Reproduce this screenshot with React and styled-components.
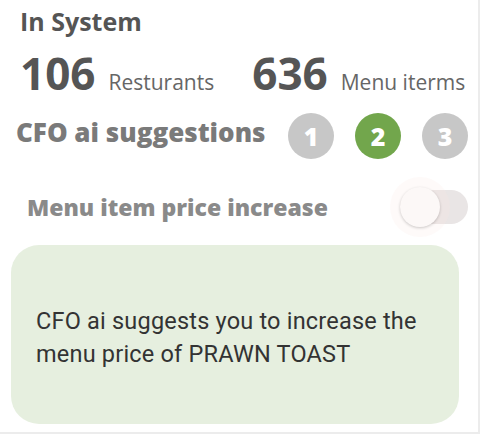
import styled, { createGlobalStyle } from "styled-components";

const GlobalStyle = createGlobalStyle`
  html, body {
    margin: 0;
    padding: 0;
    background: #ffffff;
  }
  * {
    box-sizing: border-box;
  }
`;

const Panel = styled.div`
  width: 480px;
  height: 434px;
  display: flex;
  flex-direction: column;
  padding: 0 10px 0 11px;
  border-right: 2px solid #ececec;
  border-bottom: 2px solid #ececec;
  font-family: "Open Sans", "Noto Sans", sans-serif;
  overflow: hidden;
`;

const Title = styled.h2`
  margin: 4px 0 0 9px;
  font-size: 25px;
  font-weight: 700;
  color: #555;
  line-height: 34px;
`;

const Stats = styled.div`
  display: flex;
  align-items: baseline;
  gap: 38px;
  margin: 11px 0 0 9px;
  height: 48px;
`;

const Stat = styled.div`
  display: flex;
  align-items: baseline;
  gap: 13px;
`;

const Count = styled.span`
  font-size: 44px;
  font-weight: 700;
  color: #555;
  line-height: 48px;
`;

const StatLabel = styled.span`
  font-size: 21px;
  color: #666;
`;

const SuggestionRow = styled.div`
  display: flex;
  align-items: center;
  margin: 16px 0 0 5px;
`;

const SectionLabel = styled.h3`
  margin: 0 0 8px;
  font-size: 26px;
  font-weight: 800;
  color: #7a7a7a;
  flex: 1;
`;

const Steps = styled.div`
  display: flex;
  gap: 21px;
`;

const Step = styled.span`
  width: 46px;
  height: 46px;
  border-radius: 50%;
  display: flex;
  align-items: center;
  justify-content: center;
  background: ${(p) => (p.$active ? "#72a64c" : "#c7c7c7")};
  color: #fff;
  font-size: 25px;
  font-weight: 800;
`;

const ToggleRow = styled.div`
  display: flex;
  align-items: center;
  justify-content: space-between;
  margin: 28px 0 0 16px;
  height: 40px;
`;

const ToggleLabel = styled.span`
  font-size: 23px;
  font-weight: 800;
  color: #8a8a8a;
`;

const Switch = styled.div`
  position: relative;
  width: 68px;
  height: 34px;
  border-radius: 17px;
  background: #e9e5e5;
`;

const Knob = styled.div`
  position: absolute;
  left: 0;
  top: -3px;
  width: 40px;
  height: 40px;
  border-radius: 50%;
  background: #fcf8f7;
  box-shadow: 0 1px 3px rgba(0, 0, 0, 0.2), 0 0 0 10px rgba(250, 232, 228, 0.22);
`;

const Card = styled.div`
  margin: 18px 9px 0 0;
  height: 179px;
  border-radius: 28px;
  background: #e6efdf;
  display: flex;
  align-items: center;
  padding: 6px 20px 0 25px;
`;

const Message = styled.p`
  margin: 0;
  font-family: Roboto, "Open Sans", sans-serif;
  font-size: 23.5px;
  letter-spacing: 0.2px;
  line-height: 33px;
  color: #333;
`;

export default function App() {
  return (
    <>
      <GlobalStyle />
      <Panel>
        <Title>In System</Title>
        <Stats>
          <Stat>
            <Count>106</Count>
            <StatLabel>Resturants</StatLabel>
          </Stat>
          <Stat>
            <Count>636</Count>
            <StatLabel>Menu iterms</StatLabel>
          </Stat>
        </Stats>
        <SuggestionRow>
          <SectionLabel>CFO ai suggestions</SectionLabel>
          <Steps>
            <Step>1</Step>
            <Step $active>2</Step>
            <Step>3</Step>
          </Steps>
        </SuggestionRow>
        <ToggleRow>
          <ToggleLabel>Menu item price increase</ToggleLabel>
          <Switch>
            <Knob />
          </Switch>
        </ToggleRow>
        <Card>
          <Message>
            CFO ai suggests you to increase the menu price of PRAWN TOAST
          </Message>
        </Card>
      </Panel>
    </>
  );
}
